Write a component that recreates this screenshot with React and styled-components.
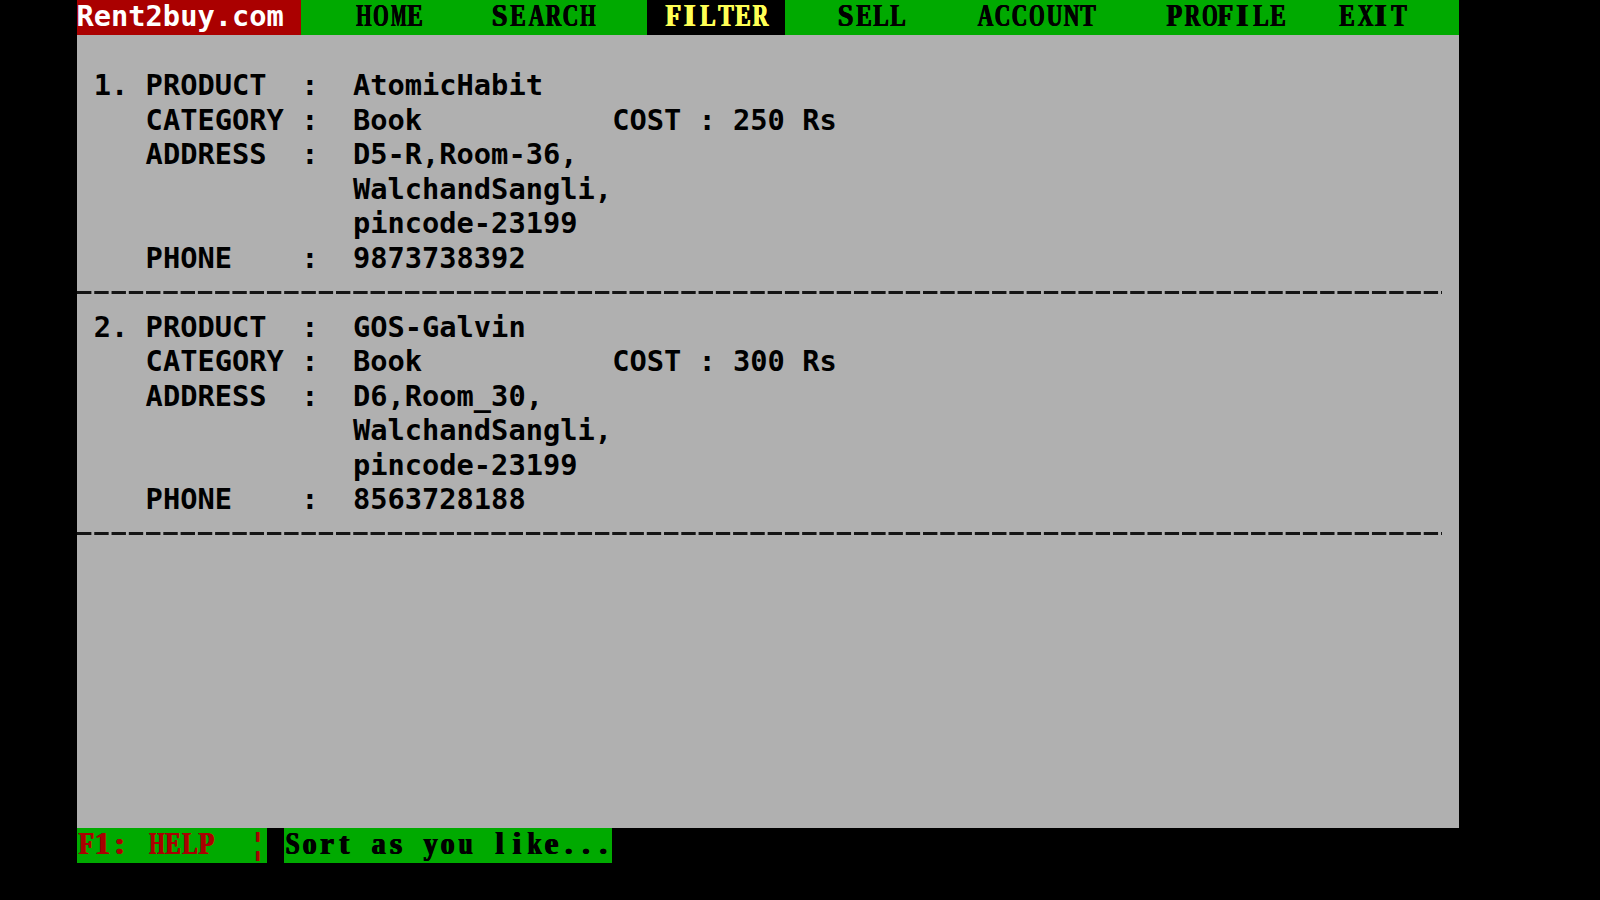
import React from "react";
import styled, { createGlobalStyle } from "styled-components";

// text-mode grid: 80 columns x 25 rows
const CELL = 17.28;
const ROW = 34.5;
const cells = (n) => `${(n * CELL).toFixed(2)}px`;

const GREEN = "#00aa00";
const RED = "#aa0000";
const GRAY = "#b0b0b0";
const YELLOW = "#ffff55";

const SERIF_SIZE = 31;

// advance widths (em) of the bold serif, used to squeeze each glyph into its cell
const ADVANCE = {
  A: 0.722, C: 0.722, E: 0.667, F: 0.611, H: 0.778, I: 0.389, L: 0.667,
  M: 0.944, N: 0.722, O: 0.778, P: 0.611, R: 0.722, S: 0.556, T: 0.667,
  U: 0.722, X: 0.722, "1": 0.5, ":": 0.333, "¦": 0.22, " ": 0.25,
  a: 0.5, e: 0.444, i: 0.278, k: 0.556, l: 0.278, o: 0.5, r: 0.444,
  s: 0.389, t: 0.333, u: 0.556, y: 0.5, ".": 0.25,
};

const GlobalStyle = createGlobalStyle`
  html, body {
    margin: 0;
    padding: 0;
    background: #000;
  }
  body {
    width: 1600px;
    height: 900px;
    overflow: hidden;
  }
`;

const Screen = styled.div`
  width: ${cells(80)};
  margin-left: 76.5px;
  display: flex;
  flex-direction: column;
  font-family: "DejaVu Sans Mono", monospace;
  font-weight: 700;
  font-size: 28.7px;
  line-height: ${ROW}px;
  white-space: pre;
`;

// the bios-style serif font: one glyph per character cell
const Glyph = styled.span`
  display: inline-block;
  width: ${CELL}px;
  text-align: center;
  font-family: "Liberation Serif", "Times New Roman", serif;
  font-weight: 700;
  font-size: ${SERIF_SIZE}px;
  text-shadow: 0.7px 0 0 currentColor, -0.7px 0 0 currentColor;
  transform: translateY(-1.5px) scaleX(${(p) => p.$sx});
`;

const SerifText = ({ text, fit = 15.5 }) =>
  text.split("").map((ch, i) => {
    const w = (ADVANCE[ch] || 0.6) * SERIF_SIZE;
    return (
      <Glyph key={i} $sx={Math.min(1, fit / w).toFixed(3)}>
        {ch}
      </Glyph>
    );
  });

const MenuBar = styled.nav`
  display: flex;
  height: ${ROW}px;
  background: ${GREEN};
`;

const Brand = styled.div`
  width: ${cells(13)};
  background: ${RED};
  color: #fff;
  margin-top: -1px;
`;

const MenuItem = styled.div`
  height: ${ROW}px;
  margin-left: ${(p) => cells(p.$gap)};
  padding: 0 ${(p) => (p.$active ? cells(1) : 0)};
  background: ${(p) => (p.$active ? "#000" : "transparent")};
  color: ${(p) => (p.$active ? YELLOW : "#000")};
`;

const Workspace = styled.main`
  box-sizing: border-box;
  height: ${ROW * 23}px;
  padding-top: ${ROW}px;
  background: ${GRAY};
  color: #000;
`;

const Line = styled.div`
  display: flex;
  height: ${ROW}px;
  margin-top: -1px;
  margin-bottom: 1px;
`;

const Slot = styled.span`
  flex: none;
  box-sizing: border-box;
  width: ${(p) => cells(p.$w)};
  padding-left: ${(p) => cells(p.$pad || 0)};
`;

const Divider = styled.div`
  box-sizing: border-box;
  height: ${ROW}px;
  padding-top: 14.5px;
  &::before {
    content: "";
    display: block;
    width: ${cells(79)};
    height: 3px;
    background: linear-gradient(to right, #151515 0 14px, transparent 14px) 0 0 /
      ${CELL}px 3px repeat-x;
  }
`;

const StatusBar = styled.footer`
  display: flex;
  height: ${ROW}px;
  background: #000;
`;

const HelpKey = styled.div`
  width: ${cells(11)};
  background: ${GREEN};
  color: ${RED};
`;

const Message = styled.div`
  width: ${cells(19)};
  margin-left: ${cells(1)};
  background: ${GREEN};
  color: #000;
`;

const menu = [
  { label: "HOME", gap: 3 },
  { label: "SEARCH", gap: 4 },
  { label: "FILTER", gap: 3, active: true },
  { label: "SELL", gap: 3 },
  { label: "ACCOUNT", gap: 4 },
  { label: "PROFILE", gap: 4 },
  { label: "EXIT", gap: 3 },
];

const records = [
  {
    product: "AtomicHabit",
    category: "Book",
    cost: 250,
    address: ["D5-R,Room-36,", "WalchandSangli,", "pincode-23199"],
    phone: "9873738392",
  },
  {
    product: "GOS-Galvin",
    category: "Book",
    cost: 300,
    address: ["D6,Room_30,", "WalchandSangli,", "pincode-23199"],
    phone: "8563728188",
  },
];

const Field = ({ index = "", label = "", value = "", extra = "" }) => (
  <Line>
    <Slot $w={4} $pad={1}>
      {index}
    </Slot>
    <Slot $w={9}>{label}</Slot>
    <Slot $w={3}>{label ? ":" : ""}</Slot>
    <Slot $w={15}>{value}</Slot>
    <Slot $w={49}>{extra}</Slot>
  </Line>
);

const Record = ({ n, item }) => (
  <>
    <Field index={`${n}.`} label="PRODUCT" value={item.product} />
    <Field
      label="CATEGORY"
      value={item.category}
      extra={`COST : ${item.cost} Rs`}
    />
    <Field label="ADDRESS" value={item.address[0]} />
    {item.address.slice(1).map((a) => (
      <Field key={a} value={a} />
    ))}
    <Field label="PHONE" value={item.phone} />
    <Divider />
  </>
);

export default function App() {
  return (
    <>
      <GlobalStyle />
      <Screen>
        <MenuBar>
          <Brand>Rent2buy.com</Brand>
          {menu.map((m) => (
            <MenuItem key={m.label} $gap={m.gap} $active={m.active}>
              <SerifText text={m.label} />
            </MenuItem>
          ))}
        </MenuBar>
        <Workspace>
          {records.map((r, i) => (
            <Record key={r.product} n={i + 1} item={r} />
          ))}
        </Workspace>
        <StatusBar>
          <HelpKey>
            <SerifText text="F1: HELP  ¦" />
          </HelpKey>
          <Message>
            <SerifText text="Sort as you like..." fit={14} />
          </Message>
        </StatusBar>
      </Screen>
    </>
  );
}
